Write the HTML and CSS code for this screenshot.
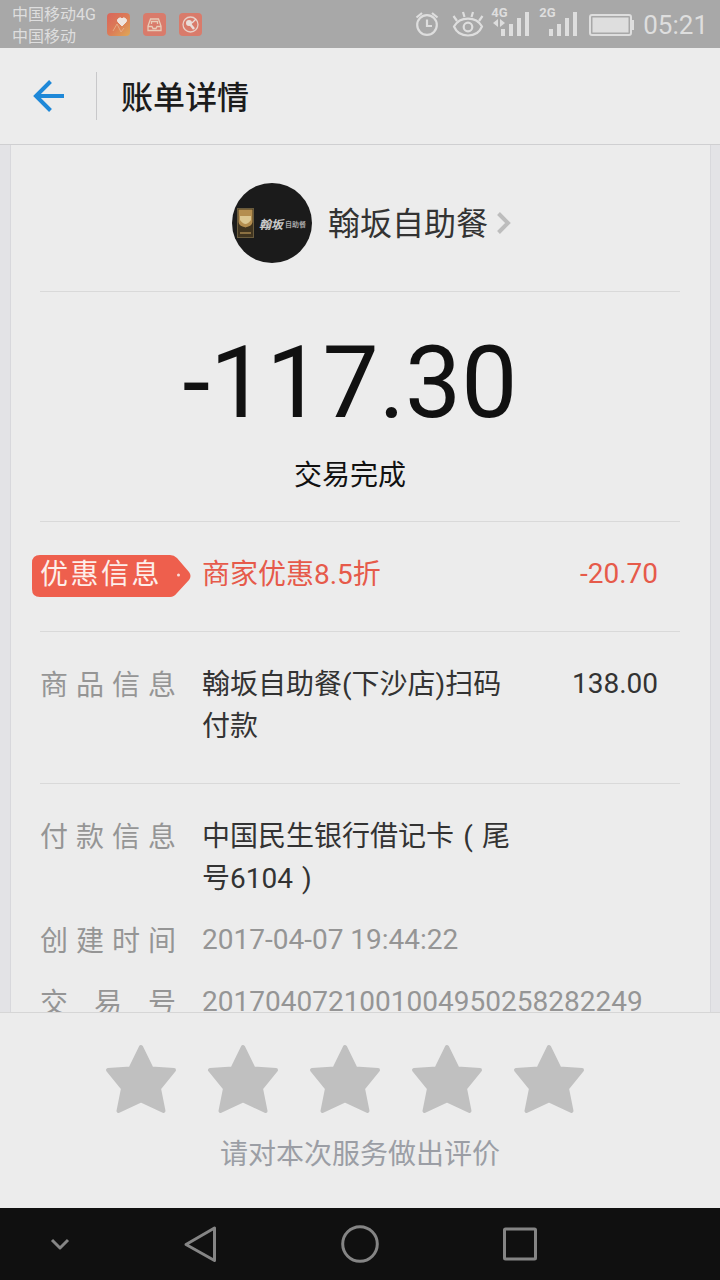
FILE: index.html
```html
<!DOCTYPE html>
<html lang="zh-CN">
<head>
  <meta charset="UTF-8">
  <meta name="viewport" content="width=device-width, initial-scale=1.0">
  <title>账单详情</title>
  <link rel="stylesheet" href="styles.css">
</head>
<body>
  <div class="status-bar">
    <div class="carriers">
      <div>中国移动4G</div>
      <div>中国移动</div>
    </div>
    <svg class="notices" width="96" height="24" viewBox="0 0 96 24">
      <defs>
        <linearGradient id="health" x1="0" y1="0" x2="1" y2="1">
          <stop offset="0" stop-color="#d9655b"/>
          <stop offset="0.5" stop-color="#dc7b57"/>
          <stop offset="1" stop-color="#dfa957"/>
        </linearGradient>
      </defs>
      <rect x="0" y="0" width="23" height="23" rx="4" fill="url(#health)"/>
      <path d="M15 13l-4.200-4.200a2.600 2.600 0 0 1 4.200-3 2.600 2.600 0 0 1 4.200 3z" fill="#eee5df" stroke="#eee5df"/>
      <path d="M6 18l4-7 4 8 3-4" fill="none" stroke="#e5aa83"/>
      <rect x="36" y="0" width="23" height="23" rx="4" fill="#d97b6b"/>
      <path d="M43.500 6h8l2.500 7v4.500h-13V13zM41 13.500h4l1 2h3l1-2h4M44.500 11V8.500h6V11" fill="none" stroke="#e8ccb8" stroke-width="1.300"/>
      <rect x="72" y="0" width="23" height="23" rx="4" fill="#d97b6b"/>
      <circle cx="83.500" cy="11.500" r="7.500" fill="none" stroke="#e8d0c8" stroke-width="1.300"/>
      <circle cx="82" cy="10" r="3" fill="#eadeda"/>
      <path d="M83 11l4 5" stroke="#eadeda" stroke-width="2.500"/>
      <path d="M85 10l4-4" stroke="#eadeda" stroke-width="1.300"/>
    </svg>
    <div class="indicators">
      <svg width="24" height="28" viewBox="0 0 24 28" fill="none" stroke="#dedede" stroke-width="2.200">
        <circle cx="12" cy="15" r="9.800"/>
        <path d="M12 9.500v6.500h5M1.500 7.500L7 3M22.500 7.500L17 3"/>
      </svg>
      <svg width="32" height="28" viewBox="0 0 32 28" fill="none" stroke="#dedede" stroke-width="2.200">
        <path d="M2 16.500c6-10.500 22-10.500 28 0-5 12-23 12-28 0z"/>
        <circle cx="16" cy="17" r="4.300"/>
        <path d="M12.500 7l-1.500-5M19.500 7l1.500-5M5 11L1.500 6M27 11l3.500-5"/>
      </svg>
      <div class="signal">
        <span class="net">4G</span>
        <svg width="40" height="30" viewBox="0 0 40 30" fill="#dedede">
          <path d="M2 14l5-4v8zM9 10l5 4-5 4z"/>
          <path d="M10 20h4v7h-4zM18 15h4v12h-4zM26 9h4v18h-4zM34 3h4v24h-4z"/>
        </svg>
      </div>
      <div class="signal">
        <span class="net">2G</span>
        <svg width="40" height="30" viewBox="0 0 40 30" fill="#dedede">
          <path d="M10 20h4v7h-4zM18 15h4v12h-4zM26 9h4v18h-4zM34 3h4v24h-4z"/>
        </svg>
      </div>
      <svg class="battery" width="46" height="24" viewBox="0 0 46 24">
        <rect x="1" y="2" width="41" height="20" rx="2" fill="none" stroke="#dedede" stroke-width="2"/>
        <rect x="3.500" y="4.500" width="36" height="15" fill="#dedede"/>
        <path d="M42 7h3v10h-3z" fill="#dedede"/>
      </svg>
      <span class="clock">05:21</span>
    </div>
  </div>

  <div class="header">
    <svg width="33" height="34" viewBox="0 0 33 34" fill="none" stroke="#1e88d8" stroke-width="4">
      <path d="M18.500 2.500L4 17l14.500 14.500M3 17h29"/>
    </svg>
    <h1>账单详情</h1>
  </div>

  <div class="content">
    <div class="card">
      <div class="merchant">
        <div class="avatar">
          <svg width="17" height="30" viewBox="0 0 17 30">
            <rect x="0.500" y="0.500" width="16" height="29" fill="#40341f" stroke="#695b3d"/>
            <path d="M1.500 1.500h14v12c0 4-4 5-7 6-3-1-7-2-7-6z" fill="#b48e4f"/>
            <path d="M3 8h11v4q-3 4-5.500 4T3 12z" fill="#dcc791"/>
            <path d="M3 25h11" stroke="#8b7042" stroke-width="2"/>
          </svg>
          <span class="logo-big">翰坂</span>
          <span class="logo-small">自助餐</span>
        </div>
        <span class="merchant-name">翰坂自助餐</span>
        <svg width="16" height="24" viewBox="0 0 16 24" fill="none" stroke="#bdbdbd" stroke-width="4">
          <path d="M2.500 2.500L12 12l-9.500 9.500"/>
        </svg>
      </div>

      <div class="total">
        <div class="amount">-117.30</div>
        <div class="state">交易完成</div>
      </div>

      <div class="section">
        <div class="row discount">
          <div class="tag">
            <svg class="tag-shape" width="159" height="42" viewBox="0 0 159 42">
              <path d="M8 0h130q4 0 7 3l12 14q3 4 0 8l-12 13q-3 4-7 4H8q-8 0-8-8V8q0-8 8-8z" fill="#ee5f4d"/>
              <circle cx="146.500" cy="20" r="1.500" fill="#f8ddd8"/>
            </svg>
            <span class="tag-text">优惠信息</span>
          </div>
          <div class="value">商家优惠8.5折</div>
          <div class="price">-20.70</div>
        </div>
      </div>

      <div class="section">
        <div class="row">
          <div class="label">商品信息</div>
          <div class="value">翰坂自助餐(下沙店)扫码付款</div>
          <div class="price">138.00</div>
        </div>
      </div>

      <div class="section">
        <div class="row">
          <div class="label">付款信息</div>
          <div class="value">中国民生银行借记卡<span class="paren">(</span>尾<br>号6104<span class="paren">)</span></div>
        </div>
        <div class="row muted">
          <div class="label">创建时间</div>
          <div class="number">2017-04-07 19:44:22</div>
        </div>
        <div class="row muted">
          <div class="label">交易号</div>
          <div class="number">2017040721001004950258282249</div>
        </div>
      </div>
    </div>
  </div>

  <div class="rating">
    <svg width="0" height="0" class="defs">
      <symbol id="star" viewBox="0 0 72 70">
        <path d="M36 3L46.500 24.500 69 26 54 44.500 58.500 67 36 56.500 13.500 67 18 44.500 3 26 25.500 24.500z" fill="#c0c0c0" stroke="#c0c0c0" stroke-width="4" stroke-linejoin="round"/>
      </symbol>
    </svg>
    <div class="stars">
      <svg width="72" height="70"><use href="#star"/></svg>
      <svg width="72" height="70"><use href="#star"/></svg>
      <svg width="72" height="70"><use href="#star"/></svg>
      <svg width="72" height="70"><use href="#star"/></svg>
      <svg width="72" height="70"><use href="#star"/></svg>
    </div>
    <div class="hint">请对本次服务做出评价</div>
  </div>

  <div class="nav-bar">
    <svg width="720" height="72" viewBox="0 0 720 72" fill="none" stroke="#858585" stroke-width="3" stroke-linejoin="round">
      <path d="M52 32l8 8 8-8"/>
      <path d="M214.500 20v32.500L186 36.500z"/>
      <circle cx="360" cy="36" r="17.300"/>
      <rect x="504.500" y="21" width="31" height="30" rx="1"/>
    </svg>
  </div>
</body>
</html>
```

FILE: styles.css
```css
* {
  box-sizing: border-box;
}
body {
  margin: 0;
  width: 720px;
  height: 1280px;
  display: flex;
  flex-direction: column;
  overflow: hidden;
  background-color: #ececec;
  font-family: Roboto, "Noto Sans CJK SC", sans-serif;
  color: #333;
}
svg {
  display: block;
  flex: none;
}

/* status bar */
.status-bar {
  display: flex;
  height: 48px;
  padding: 0 12px;
  background-color: #a8a8a8;
  color: #dedede;
}
.carriers {
  width: 95px;
  padding-top: 4px;
  font-size: 16px;
  line-height: 22px;
  white-space: nowrap;
}
.notices {
  margin-top: 13px;
}
.indicators {
  display: flex;
  align-items: center;
  margin-left: auto;
}
.indicators > svg {
  margin-right: 13px;
}
.indicators > svg + svg {
  margin-right: 7px;
}
.signal {
  position: relative;
  width: 48px;
  height: 30px;
}
.net {
  position: absolute;
  left: 0;
  top: -3px;
  font-size: 13px;
  line-height: 14px;
  font-weight: 700;
}
.indicators .battery {
  margin: 2px 8px 0 2px;
}
.clock {
  padding-top: 2px;
  font-size: 26px;
  line-height: 46px;
}

/* title bar */
.header {
  display: flex;
  align-items: center;
  flex: none;
  height: 97px;
  padding-left: 32px;
  border-bottom: 1px solid #cfcfd1;
}
.header h1 {
  height: 48px;
  margin: 0 0 0 31px;
  padding: 2px 0 0 24px;
  border-left: 1px solid #c8c8ca;
  font-size: 32px;
  line-height: 48px;
  font-weight: 500;
  color: #1c1c1c;
}

/* bill */
.content {
  height: 867px;
  padding: 0 9px 0 10px;
  overflow: hidden;
  background-color: #e3e3e6;
}
.card {
  height: 900px;
  padding: 0 30px 0 29px;
  border: 1px solid #d8d8dc;
  border-width: 0 1px;
  background-color: #ececec;
}
.merchant {
  display: flex;
  align-items: center;
  height: 147px;
  padding: 10px 0 0 192px;
  border-bottom: 1px solid #d9d9d9;
}
.avatar {
  display: flex;
  align-items: center;
  flex: none;
  width: 80px;
  height: 80px;
  padding-left: 5px;
  border-radius: 50%;
  overflow: hidden;
  background-color: #1b1b1b;
  color: #c9c9c9;
  white-space: nowrap;
}
.logo-big {
  width: 24px;
  margin-left: 5px;
  font-size: 12px;
  font-style: italic;
  font-weight: 700;
}
.logo-small {
  margin-left: 2px;
  padding-top: 2px;
  font-size: 7px;
  font-weight: 700;
  color: #a5a5a5;
}
.merchant-name {
  margin: 1px 8px 0 16px;
  font-size: 32px;
  line-height: 48px;
}
.total {
  height: 230px;
  padding: 32px 20px 0 0;
  border-bottom: 1px solid #d9d9d9;
  text-align: center;
  color: #111;
}
.amount {
  font-size: 100px;
  line-height: 118px;
}
.state {
  margin-top: 13px;
  font-size: 28px;
  line-height: 42px;
}
.section {
  height: 110px;
  padding-top: 31px;
  border-bottom: 1px solid #d9d9d9;
  font-size: 28px;
  line-height: 42px;
}
.section + .section {
  height: 152px;
}
.section:last-child {
  border-bottom: none;
}
.row {
  display: flex;
  min-height: 42px;
}
.row + .row {
  margin-top: 20px;
}
.label {
  width: 136px;
  height: 42px;
  margin-right: 26px;
  padding-top: 2px;
  color: #959595;
  text-align: justify;
  text-align-last: justify;
}
.value {
  width: 312px;
  height: 84px;
  padding-top: 1px;
}
.discount .value {
  height: 42px;
}
.price {
  margin-left: auto;
  padding-right: 22px;
}
.paren {
  display: inline-block;
  width: 28px;
  text-align: center;
}
.muted {
  color: #959595;
}
.discount {
  color: #e65a4a;
}
.tag {
  position: relative;
  width: 162px;
  padding-top: 1px;
}
.tag-shape {
  position: absolute;
  left: -8px;
  top: 2px;
}
.tag-text {
  position: relative;
  color: #fdeeea;
  letter-spacing: 2.5px;
}

/* rating */
.rating {
  height: 196px;
  padding-top: 31px;
  border-top: 1px solid #d6d6d6;
}
.defs {
  position: absolute;
}
.stars {
  display: flex;
  gap: 30px;
  padding-left: 105px;
}
.hint {
  margin-top: 20px;
  font-size: 28px;
  line-height: 42px;
  text-align: center;
  color: #9b9ea5;
}

.nav-bar {
  height: 72px;
  background-color: #101010;
}
```
